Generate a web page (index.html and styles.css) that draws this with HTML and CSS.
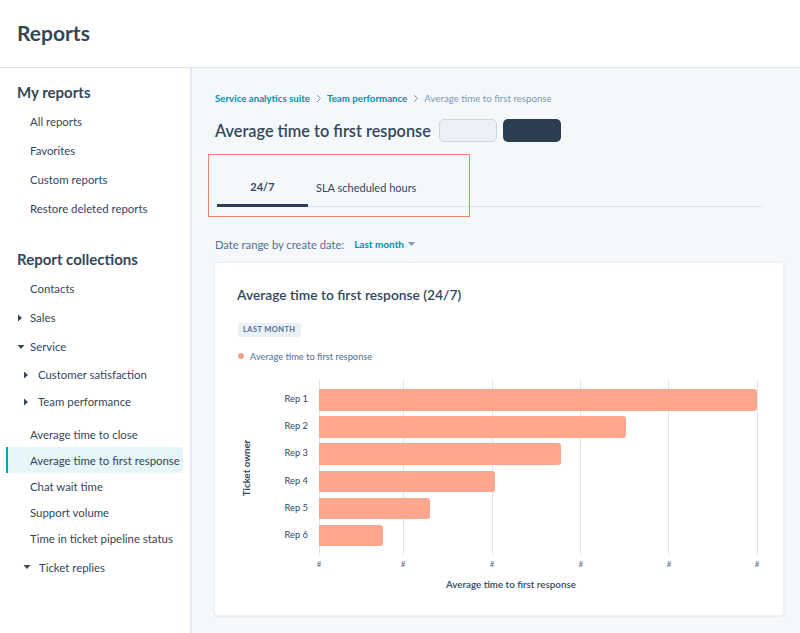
FILE: index.html
```html
<!DOCTYPE html>
<html lang="en">
<head>
<meta charset="utf-8">
<title>Reports</title>
<link rel="stylesheet" href="styles.css">
</head>
<body>
<header class="topbar"><h1 class="page-title">Reports</h1></header>
<div class="layout">
  <aside class="sidebar">
    <h2 class="side-heading">My reports</h2>
    <ul class="nav">
      <li class="nav-item">All reports</li>
      <li class="nav-item">Favorites</li>
      <li class="nav-item">Custom reports</li>
      <li class="nav-item">Restore deleted reports</li>
    </ul>
    <h2 class="side-heading second">Report collections</h2>
    <ul class="nav">
      <li class="nav-item">Contacts</li>
      <li class="nav-item has-caret"><svg class="caret" width="6" height="8" viewBox="0 0 6 8"><path d="M1 0.5 L5 4 L1 7.5 Z" fill="#33475b"/></svg>Sales</li>
      <li class="nav-item has-caret"><svg class="caret" width="8" height="6" viewBox="0 0 8 6"><path d="M0.5 1 L7.5 1 L4 5 Z" fill="#33475b"/></svg>Service</li>
      <li class="nav-item sub has-caret"><svg class="caret" width="6" height="8" viewBox="0 0 6 8"><path d="M1 0.5 L5 4 L1 7.5 Z" fill="#33475b"/></svg>Customer satisfaction</li>
      <li class="nav-item sub has-caret"><svg class="caret" width="6" height="8" viewBox="0 0 6 8"><path d="M1 0.5 L5 4 L1 7.5 Z" fill="#33475b"/></svg>Team performance</li>
      <li class="leaf first-leaf">Average time to close</li>
      <li class="leaf active">Average time to first response</li>
      <li class="leaf">Chat wait time</li>
      <li class="leaf">Support volume</li>
      <li class="leaf">Time in ticket pipeline status</li>
      <li class="nav-item sub2 has-caret"><svg class="caret" width="8" height="6" viewBox="0 0 8 6"><path d="M0.5 1 L7.5 1 L4 5 Z" fill="#33475b"/></svg>Ticket replies</li>
    </ul>
  </aside>
  <main class="main">
    <nav class="breadcrumb">
      <a class="crumb-link">Service analytics suite</a>
      <svg class="chev" width="6" height="9" viewBox="0 0 6 9"><path d="M1 1 L4.5 4.5 L1 8" fill="none" stroke="#7c98b6" stroke-width="1"/></svg>
      <a class="crumb-link">Team performance</a>
      <svg class="chev" width="6" height="9" viewBox="0 0 6 9"><path d="M1 1 L4.5 4.5 L1 8" fill="none" stroke="#7c98b6" stroke-width="1"/></svg>
      <span class="crumb-current">Average time to first response</span>
    </nav>
    <div class="title-row">
      <h2 class="report-title">Average time to first response</h2>
      <span class="btn btn-light"></span>
      <span class="btn btn-dark"></span>
    </div>
    <div class="tabs-wrap">
      <div class="tabs">
        <div class="tab active">24/7</div>
        <div class="tab">SLA scheduled hours</div>
      </div>
      <div class="highlight"></div>
    </div>
    <div class="filter-row">
      <span class="filter-label">Date range by create date:</span>
      <span class="filter-value">Last month</span>
      <svg class="filter-caret" width="7" height="4" viewBox="0 0 7 4"><path d="M0 0 L7 0 L3.5 4 Z" fill="#7c98b6"/></svg>
    </div>
    <section class="card">
      <h3 class="card-title">Average time to first response (24/7)</h3>
      <span class="badge">LAST MONTH</span>
      <div class="legend"><span class="legend-dot"></span>Average time to first response</div>
      <div class="chart">
        <div class="y-title-col"><span class="y-title">Ticket owner</span></div>
        <div class="y-labels">
          <span>Rep 1</span><span>Rep 2</span><span>Rep 3</span><span>Rep 4</span><span>Rep 5</span><span>Rep 6</span>
        </div>
        <div class="plot-col">
          <div class="plot">
            <span class="gridline" style="left:0%"></span>
            <span class="gridline" style="left:19.2%"></span>
            <span class="gridline" style="left:39.5%"></span>
            <span class="gridline" style="left:59.8%"></span>
            <span class="gridline" style="left:79.9%"></span>
            <span class="gridline" style="left:100%"></span>
            <div class="bars">
              <div class="bar" style="width:100%"></div>
              <div class="bar" style="width:70.1%"></div>
              <div class="bar" style="width:55.3%"></div>
              <div class="bar" style="width:40.2%"></div>
              <div class="bar" style="width:25.3%"></div>
              <div class="bar" style="width:14.6%"></div>
            </div>
          </div>
          <div class="ticks">
            <span class="tick" style="left:0%">#</span>
            <span class="tick" style="left:19.2%">#</span>
            <span class="tick" style="left:39.5%">#</span>
            <span class="tick" style="left:59.8%">#</span>
            <span class="tick" style="left:79.9%">#</span>
            <span class="tick" style="left:100%">#</span>
          </div>
        </div>
      </div>
      <div class="x-title">Average time to first response</div>
    </section>
  </main>
</div>
</body>
</html>
```
FILE: styles.css
```css
* { box-sizing: border-box; }
html, body { margin: 0; padding: 0; }
body {
  font-family: Lato, "Noto Sans", sans-serif;
  color: #33475b;
  width: 800px;
  height: 633px;
  overflow: hidden;
  background: #fff;
}
.topbar {
  height: 68px;
  border-bottom: 1px solid #dfe3eb;
  display: flex;
  align-items: center;
  padding-left: 17px;
}
.page-title {
  margin: 0;
  font-size: 21px;
  font-weight: 700;
  color: #33475b;
  line-height: 1;
  padding-bottom: 2px;
}
.layout {
  display: flex;
  height: 565px;
}
.sidebar {
  width: 192px;
  flex: none;
  border-right: 2px solid #e4e8ee;
  padding-top: 14px;
}
.side-heading {
  margin: 0 0 5px 17px;
  font-size: 15px;
  font-weight: 700;
  line-height: 20px;
}
.side-heading.second { margin-top: 26px; margin-bottom: 5px; }
.nav { list-style: none; margin: 0; padding: 0; }
.nav-item {
  height: 29px;
  display: flex;
  align-items: center;
  padding-left: 30px;
  font-size: 11.4px;
  position: relative;
  white-space: nowrap;
}
.has-caret .caret { position: absolute; left: 17px; top: 50%; transform: translateY(-50%); }
.nav-item.sub { height: 27px; padding-left: 38px; }
.nav-item.sub .caret { left: 23px; }
.nav-item.sub2 { height: 28px; padding-left: 39px; margin-top: 2px; }
.nav-item.sub2 .caret { left: 23px; }
.leaf {
  height: 26px;
  display: flex;
  align-items: center;
  padding-left: 22px;
  margin-left: 6px;
  width: 177px;
  font-size: 11.4px;
  white-space: nowrap;
  border-left: 2px solid transparent;
  border-radius: 0 3px 3px 0;
}
.leaf.first-leaf { margin-top: 6px; }
.leaf.active {
  background: #e5f5f8;
  border-left-color: #00a4bd;
}
.main {
  flex: 1;
  background: #f5f8fa;
  padding: 23px 16px 0 23px;
}
.breadcrumb {
  display: flex;
  align-items: center;
  height: 14px;
  font-size: 9.7px;
  white-space: nowrap;
}
.crumb-link { color: #0091ae; font-weight: 700; }
.chev { margin: 0 5px 0 6px; }
.crumb-current { color: #7c98b6; }
.title-row {
  display: flex;
  align-items: center;
  margin-top: 14px;
  height: 23px;
}
.report-title {
  margin: 0 8px 0 0;
  font-size: 16.3px;
  font-weight: 600;
  line-height: 23px;
  white-space: nowrap;
}
.btn {
  width: 58px;
  height: 23px;
  border-radius: 5px;
  display: inline-block;
}
.btn-light { background: #eaf0f6; border: 1px solid #cbd6e2; margin-right: 6px; }
.btn-dark { background: #2d3e50; }
.tabs-wrap {
  position: relative;
  margin-top: 25px;
  margin-left: 2px;
  width: 546px;
}
.tabs {
  display: flex;
  height: 40px;
  border-bottom: 1px solid #dfe3eb;
}
.tab {
  display: flex;
  align-items: center;
  justify-content: center;
  font-size: 11px;
  color: #33475b;
  padding: 1px 8px 0;
}
.tab.active {
  width: 91px;
  font-weight: 700;
  border-bottom: 3px solid #2d3e50;
  margin-bottom: -1px;
}
.highlight {
  position: absolute;
  left: -9px;
  top: -13px;
  width: 262px;
  height: 63px;
  border: 1.5px solid #f2836b;
}
.filter-row {
  display: flex;
  align-items: center;
  margin-top: 29px;
  height: 16px;
  font-size: 11.2px;
}
.filter-label { color: #516f90; margin-right: 10px; }
.filter-value { color: #0091ae; font-weight: 700; font-size: 10px; }
.filter-caret { margin-left: 4px; }
.card {
  margin-top: 10px;
  margin-left: -1px;
  width: 570px;
  height: 354px;
  background: #fff;
  border-radius: 3px;
  box-shadow: 0 1px 2px rgba(45, 62, 80, 0.08);
  border: 1px solid #edf0f4;
  padding: 22px 26px 0 22px;
}
.card-title {
  margin: 0;
  font-size: 13.8px;
  font-weight: 600;
  line-height: 20px;
  white-space: nowrap;
}
.badge {
  display: inline-block;
  margin-top: 18px;
  margin-left: 1px;
  height: 14px;
  line-height: 14px;
  padding: 0 5px;
  background: #eaf0f6;
  border-radius: 2px;
  font-size: 7.5px;
  font-weight: 700;
  letter-spacing: 0.4px;
  color: #516f90;
}
.legend {
  display: flex;
  align-items: center;
  margin-top: 13px;
  margin-left: 1px;
  font-size: 9.3px;
  color: #516f90;
  height: 12px;
}
.legend-dot {
  width: 6px;
  height: 6px;
  border-radius: 50%;
  background: #fc9e85;
  margin-right: 6px;
}
.chart {
  display: flex;
  margin-top: 18px;
}
.y-title-col {
  width: 18px;
  display: flex;
  align-items: center;
  justify-content: center;
  height: 175px;
  padding-top: 0;
}
.y-title {
  transform: rotate(-90deg);
  white-space: nowrap;
  font-size: 9.7px;
  font-weight: 700;
}
.y-labels {
  width: 53px;
  display: flex;
  flex-direction: column;
  align-items: flex-end;
  padding-top: 9px;
  gap: 5.7px;
}
.y-labels span {
  height: 21.5px;
  line-height: 20px;
  font-size: 9.3px;
  color: #33475b;
}
.plot-col {
  margin-left: 11px;
  flex: 1;
}
.plot {
  position: relative;
  height: 175px;
}
.gridline {
  position: absolute;
  top: 0;
  bottom: 0;
  width: 1px;
  margin-left: -0.5px;
  background: #dfe3eb;
}
.bars {
  position: relative;
  padding-top: 9px;
  display: flex;
  flex-direction: column;
  gap: 5.7px;
}
.bar {
  height: 21.5px;
  background: #fea58e;
  border-radius: 0 3px 3px 0;
}
.ticks {
  position: relative;
  height: 21px;
}
.tick {
  position: absolute;
  top: 4px;
  transform: translateX(-50%);
  font-size: 8px;
  color: #516f90;
}
.x-title {
  margin-top: 2px;
  margin-left: 209px;
  font-size: 9.8px;
  font-weight: 600;
}
```
